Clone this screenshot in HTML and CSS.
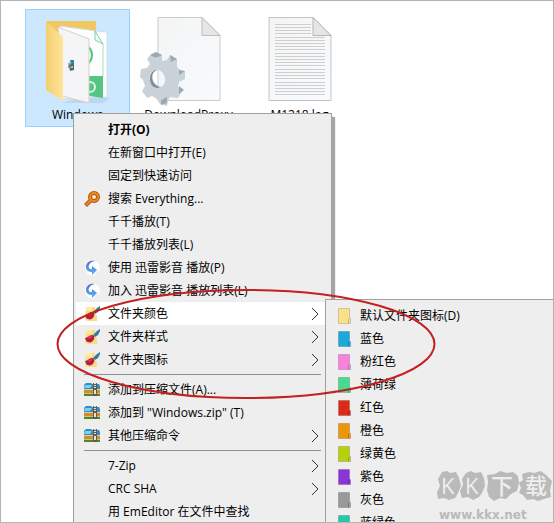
FILE: index.html
```
<!DOCTYPE html>
<html lang="zh-CN">
  <head>
    <meta charset="UTF-8" />
    <meta name="viewport" content="width=device-width, initial-scale=1.0" />
    <title>文件夹</title>
    <link rel="stylesheet" href="styles.css">
  </head>
  <body>
    <!-- Shared icons -->
    <svg class="defs" width="0" height="0" aria-hidden="true">
      <defs>
        <linearGradient id="folderFill" x1="0" x2="1">
          <stop offset="0" stop-color="#f5cf70" />
          <stop offset="1" stop-color="#ffe49a" />
        </linearGradient>
        <linearGradient id="paperFill" x1="0" y1="0" x2="1" y2="1">
          <stop offset="0" stop-color="#f4f4f4" />
          <stop offset="1" stop-color="#f7fbfe" />
        </linearGradient>
        <linearGradient id="blueFill" x1="0" y1="0" x2="0" y2="1">
          <stop offset="0" stop-color="#5468cf" />
          <stop offset="1" stop-color="#5cb6f2" />
        </linearGradient>
      </defs>
      <symbol id="i-search" viewBox="0 0 16 16">
        <path d="M1.500 14.500 7 9" stroke="#b4560f" stroke-width="4" />
        <circle cx="10" cy="6" r="4" fill="#fbe9d3" stroke="#b4560f" stroke-width="4" />
        <path d="M2 14 7 9" stroke="#ee8a26" stroke-width="2" />
        <circle cx="10" cy="6" r="4" fill="none" stroke="#ee8a26" stroke-width="2" />
      </symbol>
      <symbol id="i-player" viewBox="0 0 16 16">
        <circle cx="8.500" cy="8" r="7.500" fill="#fff" />
        <path d="M11 1C6-.5 1.500 3 2 7.500 2.500 11 5 12 8 12v3l5-5-5-4v3C5 9 4 7.500 5 5c1-2.500 3-3.500 6-4Z" fill="url(#blueFill)" />
        <path d="M14 9c0 3-2 4.500-4 5.500 3 0 5-2.500 4-5.500Z" fill="#c2d9ef" />
      </symbol>
      <symbol id="i-brush" viewBox="0 0 16 16">
        <path d="M2 1h9v7l2 2v5H4l-3-1Z" fill="#fbdc84" />
        <path d="M2 1h6v4H2Z" fill="#fdeb9e" />
        <path d="m9 6 4-4 3-2v2l-2 4-3 2Z" fill="#2e7f9d" />
        <path d="m9 6 2 2-1 1-2-2Z" fill="#ddd" />
        <path d="M1 9c3 0 4-3 7-3 2 0 3 2 2 4-1 3-4 4-6 3-2 0-2-2-3-4Z" fill="#b81b45" />
        <path d="M3 9c2 0 3-2 5-2-1 2-2 3-5 2Z" fill="#e0526c" />
      </symbol>
      <symbol id="i-zip" viewBox="0 0 16 16">
        <path d="M0 3 2 1h5l1 1h7l1 2v4H0Z" fill="#2f8cc6" />
        <path d="M1 3h7l-2 3H0Z" fill="#7ad0f4" />
        <path d="M0 7h16v4H0Z" fill="#d08a38" />
        <path d="M0 7h16v1H0Z" fill="#f4d078" />
        <path d="M0 11h16v3H0Z" fill="#57812d" />
        <path d="M0 11h16v1H0Z" fill="#b3d169" />
        <path d="M9 1h4v13H9Z" fill="#5e5c50" />
        <path d="M11 1v6" stroke="#e9e4cb" stroke-width="2" stroke-dasharray="1 1" />
        <path d="M10 8h2v4h-2Z" fill="#eee6c3" />
      </symbol>
      <symbol id="i-arrow" viewBox="0 0 8 14">
        <path d="m1 1 6 6-6 6" fill="none" stroke="#333" />
      </symbol>
      <symbol id="i-folder" viewBox="0 0 16 16">
        <path d="M2.500.5h11v10h1v5h-12Z" fill="currentColor" stroke="#000" stroke-opacity=".16" />
        <path d="M12.500 11v4.500" stroke="#000" stroke-opacity=".2" />
      </symbol>
    </svg>

    <main class="desktop">
      <ul class="files">
        <li class="file selected">
          <svg class="file-icon" viewBox="0 0 80 88">
            <path d="M50 78 72 81l-7 5H24Z" fill="#9fc1dc" opacity=".4" />
            <path d="M8 4h50v14L24 40Z" fill="#f0c760" />
            <path d="m22 9 36 5 11 1v65l-45 2Z" fill="#fdfefe" stroke="#d3dde3" />
            <path d="m57 14 8 13-8-4Z" fill="#eefaf2" stroke="#83d2a3" />
            <path d="M65 27v33" stroke="#a5dfbc" />
            <path d="M51 59h14v22l-14-2Z" fill="#54c583" />
            <circle cx="43" cy="38" r="11" fill="none" stroke="#54c583" stroke-width="2" />
            <circle cx="52" cy="70" r="5" fill="none" stroke="#d8f4e2" stroke-width="2" />
            <path d="m20 10 31 12v64l-27-7Z" fill="#f5f5f7" stroke="#d9cfc5" />
            <path d="m8 4 17 16v64L8 73Z" fill="url(#folderFill)" />
            <path d="M32 43h4v5l-3 1Z" fill="#3f7da8" />
            <path d="m30 46 3-1 1 7-4-1Z" fill="#7dbacd" />
            <path d="m31 48 5-2v7l-4 1Z" fill="#59666b" />
            <path d="m32 50 3-1v2h-2Z" fill="#c5d47c" />
          </svg>
          <span class="file-name">Windows</span>
        </li>
        <li class="file">
          <svg class="file-icon" viewBox="0 0 80 88">
            <path d="M9 .5h44l18 18v65H9Z" fill="url(#paperFill)" stroke="#cbcbcb" />
            <path d="M53 .5v18h18Z" fill="#e6e6e6" stroke="#bdbdbd" />
            <g transform="translate(-13 0)">
              <path fill-rule="evenodd" d="m14 38 6-3 6 3v6l5-1 3-5 7 4v8l3 3 5 1v8l-6 3-1 5 4 4-4 7-8-1-2 4-1 5-7-2-3-5-5-3-5 2-5-7 3-5-2-6-3-3 1-8 6-1 3-4-3-5 4-5 6 5 2-1Zm5 15c-5 2-6 6-5 11 2 6 7 9 11 6 4-2 5-7 3-12-2-4-5-6-9-5Z" fill="#c9d1d9" />
              <path d="m14 38 6-3 6 3-6 3ZM34 38l7 4-6 3ZM43 53l6 1-6 4ZM43 69l5 4-5 4ZM25 83l6-3v6l-6 2Z" fill="#9fa8b0" />
              <path d="M19 53c-8 3-6 18 2 18 2 0 4-1 4-1-9-1-12-14-4-17Z" fill="#858d95" />
            </g>
          </svg>
          <span class="file-name">DownloadProxy</span>
        </li>
        <li class="file">
          <svg class="file-icon" viewBox="0 0 80 88">
            <path d="M9 .5h44l18 18v65H9Z" fill="url(#paperFill)" stroke="#c4c4c4" />
            <path d="M15 7.500h36M15 10.500h36M15 13.500h36M15 16.500h36M15 20.500h50M15 23.500h50M15 26.500h50M15 29.500h50M15 32.500h50M15 36.500h50M15 39.500h50M15 42.500h50M15 45.500h50M15 48.500h50M15 52.500h50M15 55.500h50M15 58.500h50M15 61.500h50M15 65.500h50M15 68.500h50M15 71.500h50M15 74.500h50M15 77.500h50" stroke="#cecece" />
            <path d="M53 .5v18h18Z" fill="#e6e6e6" stroke="#b5b5b5" />
          </svg>
          <span class="file-name">M1218.log</span>
        </li>
      </ul>

      <!-- Context menu -->
      <div class="menu main-menu">
        <button class="item default"><span class="icon"></span>打开(O)</button>
        <button class="item"><span class="icon"></span>在新窗口中打开(E)</button>
        <button class="item"><span class="icon"></span>固定到快速访问</button>
        <button class="item"><svg class="icon"><use href="#i-search" /></svg>搜索 Everything...</button>
        <button class="item"><span class="icon"></span>千千播放(T)</button>
        <button class="item"><span class="icon"></span>千千播放列表(L)</button>
        <button class="item"><svg class="icon"><use href="#i-player" /></svg>使用 迅雷影音 播放(P)</button>
        <button class="item"><svg class="icon"><use href="#i-player" /></svg>加入 迅雷影音 播放列表(L)</button>
        <button class="item active"><svg class="icon"><use href="#i-brush" /></svg>文件夹颜色<svg class="arrow"><use href="#i-arrow" /></svg></button>
        <button class="item"><svg class="icon"><use href="#i-brush" /></svg>文件夹样式<svg class="arrow"><use href="#i-arrow" /></svg></button>
        <button class="item"><svg class="icon"><use href="#i-brush" /></svg>文件夹图标<svg class="arrow"><use href="#i-arrow" /></svg></button>
        <hr class="separator">
        <button class="item"><svg class="icon"><use href="#i-zip" /></svg>添加到压缩文件(A)...</button>
        <button class="item"><svg class="icon"><use href="#i-zip" /></svg>添加到 "Windows.zip" (T)</button>
        <button class="item"><svg class="icon"><use href="#i-zip" /></svg>其他压缩命令<svg class="arrow"><use href="#i-arrow" /></svg></button>
        <hr class="separator">
        <button class="item"><span class="icon"></span>7-Zip<svg class="arrow"><use href="#i-arrow" /></svg></button>
        <button class="item"><span class="icon"></span>CRC SHA<svg class="arrow"><use href="#i-arrow" /></svg></button>
        <button class="item"><span class="icon"></span>用 EmEditor 在文件中查找</button>
      </div>

      <!-- Folder colour submenu -->
      <div class="menu sub-menu">
        <button class="item"><svg class="icon yellow"><use href="#i-folder" /></svg>默认文件夹图标(D)</button>
        <button class="item"><svg class="icon blue"><use href="#i-folder" /></svg>蓝色</button>
        <button class="item"><svg class="icon pink"><use href="#i-folder" /></svg>粉红色</button>
        <button class="item"><svg class="icon mint"><use href="#i-folder" /></svg>薄荷绿</button>
        <button class="item"><svg class="icon red"><use href="#i-folder" /></svg>红色</button>
        <button class="item"><svg class="icon orange"><use href="#i-folder" /></svg>橙色</button>
        <button class="item"><svg class="icon lime"><use href="#i-folder" /></svg>绿黄色</button>
        <button class="item"><svg class="icon purple"><use href="#i-folder" /></svg>紫色</button>
        <button class="item"><svg class="icon gray"><use href="#i-folder" /></svg>灰色</button>
        <button class="item"><svg class="icon teal"><use href="#i-folder" /></svg>蓝绿色</button>
      </div>

      <svg class="marker" viewBox="0 0 380 110">
        <ellipse cx="190" cy="55" rx="188.500" ry="54" fill="none" stroke="#c3201f" stroke-width="2" />
      </svg>

      <div class="watermark">
        <svg class="watermark-logo" viewBox="0 0 116 32">
          <g fill="#bababa">
            <path d="m5 2 5-1 3 2 6-1 3 6 2 8-3 7-3 5-6 2-5-2-6 1-1-7 3-6-2-7Z" />
            <path d="m29 3 5-2 4 2 6-1 3 6 1 8-3 7-3 4-6 3-5-3-6 1-2-7 3-6-1-6Z" />
            <path d="m50 5 8-1 5-3 7 2 6-1 5 4 1 7-2 8-6 3-5 5-6-1-6 3-5-4-2-7 1-8Z" />
            <path d="m85 4 7-2 5 1 7-2 5 4 6 6-2 9 1 7-7 2-6 2-5-2-6 1-4-5-4-2 2-5-2-5 4-3Z" />
          </g>
          <g class="watermark-text">
            <text x="4" y="24">K</text>
            <text x="28" y="24">K</text>
            <text x="54" y="24">下</text>
            <text x="88" y="24">载</text>
          </g>
        </svg>
        <span class="watermark-url">www.kkx.net</span>
      </div>
    </main>
  </body>
</html>
```
FILE: styles.css
```
* {
  margin: 0;
  padding: 0;
  box-sizing: border-box;
}

body {
  font-family: "Open Sans", "Noto Sans CJK SC", sans-serif;
  font-size: 12px;
  color: #000;
  background: #fff;
}

.defs {
  position: absolute;
}

.desktop {
  position: relative;
  height: 100vh;
  overflow: hidden;
  border: 1px solid #b4b4b4;
}

/* Files */
.files {
  display: flex;
  gap: 6px;
  padding: 8px 24px;
  list-style: none;
}

.file {
  display: flex;
  flex-direction: column;
  align-items: center;
  width: 105px;
  height: 118px;
  padding-top: 7px;
  border: 1px solid transparent;
}

.file.selected {
  background: #cce8ff;
  border-color: #99d1ff;
}

.file-icon {
  width: 80px;
  height: 88px;
  overflow: visible;
}

.file-name {
  line-height: 20px;
}

/* Menus */
.menu {
  position: absolute;
  padding: 4px 2px;
  background: #eee;
  border: 1px solid #a0a0a0;
}

.main-menu {
  top: 112px;
  left: 72px;
  width: 259px;
  box-shadow: 3px 4px 1px rgba(0, 0, 0, 0.35);
}

.sub-menu {
  top: 298px;
  left: 324px;
  width: 240px;
}

.item {
  display: flex;
  align-items: center;
  gap: 8px;
  width: 100%;
  height: 23px;
  padding: 0 10px 0 8px;
  border: none;
  background: none;
  font: inherit;
  line-height: 23px;
  color: inherit;
  text-align: left;
  white-space: nowrap;
}

.item:hover,
.item.active {
  background: #fff;
}

.item.default {
  font-weight: bold;
}

.icon {
  flex: none;
  width: 16px;
  height: 16px;
}

.arrow {
  width: 8px;
  height: 14px;
  margin-left: auto;
}

.separator {
  height: 1px;
  margin: 3px 8px;
  border: none;
  background: #919191;
}

/* Folder colours */
.yellow { color: #fbe08a; }
.blue { color: #1ba8dc; }
.pink { color: #fa82dc; }
.mint { color: #48da90; }
.red { color: #dc2c18; }
.orange { color: #ee950c; }
.lime { color: #b6d20e; }
.purple { color: #8b35d6; }
.gray { color: #999; }
.teal { color: #25c9ab; }

/* Red ring around the folder entries */
.marker {
  position: absolute;
  top: 288px;
  left: 55px;
  width: 380px;
  height: 110px;
  pointer-events: none;
}

.watermark {
  position: absolute;
  right: 0;
  bottom: 0;
  width: 116px;
  pointer-events: none;
}

.watermark-logo {
  display: block;
  width: 116px;
  height: 32px;
}

.watermark-text {
  fill: #eee;
  font-size: 22px;
  font-weight: 500;
}

.watermark-url {
  display: block;
  padding: 6px 2px 0;
  font-family: "DejaVu Sans", sans-serif;
  font-size: 12px;
  font-weight: bold;
  line-height: 14px;
  color: #bababa;
}
```
